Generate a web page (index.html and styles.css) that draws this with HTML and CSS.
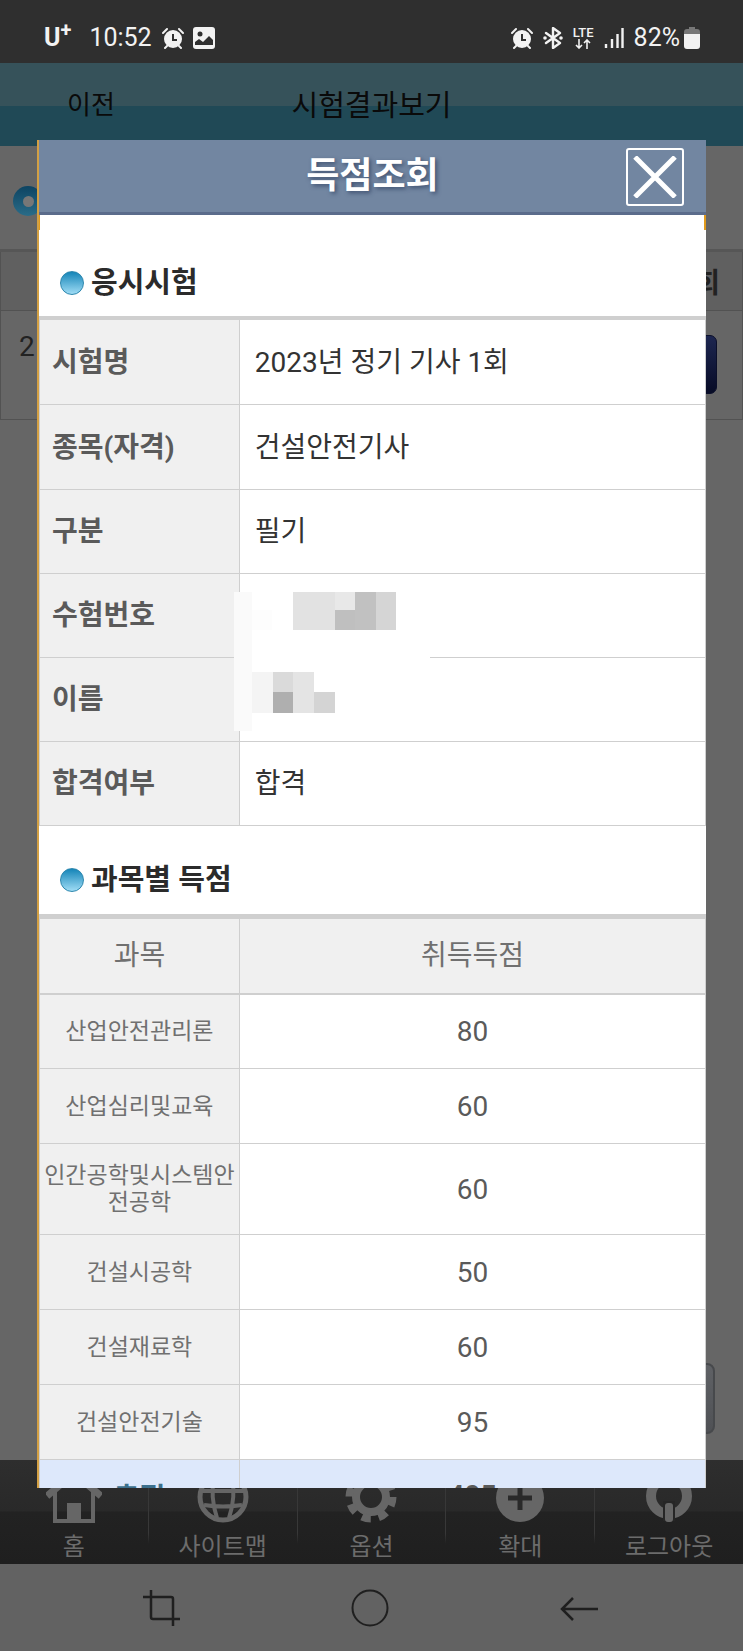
FILE: index.html
```html
<!DOCTYPE html>
<html lang="ko">

<head>
    <meta charset="UTF-8">
    <meta name="viewport" content="width=device-width, initial-scale=1.0">
    <title>득점조회</title>
    <link rel="stylesheet" href="styles.css">
</head>

<body>
    <!-- status bar -->
    <div class="status-bar">
        <span class="carrier">U<sup>+</sup></span>
        <span class="clock">10:52</span>
        <svg class="alarm" width="22" height="22" viewBox="0 0 22 22">
            <circle cx="11" cy="12" r="9" fill="#f2f2f2" />
            <path d="M1 6L5 2M21 6L17 2M5 19L3 21M17 19L19 21" stroke="#f2f2f2" stroke-width="2" stroke-linecap="round" />
            <path d="M11 7v6h4" fill="none" stroke="#2f2f2f" stroke-width="2" />
        </svg>
        <svg class="picture" width="22" height="22" viewBox="0 0 22 22">
            <rect width="22" height="22" rx="3" fill="#f2f2f2" />
            <circle cx="7" cy="7" r="2.5" fill="#2f2f2f" />
            <path d="M2 18v-3l4-3 4 3 6-6 4 4v5z" fill="#2f2f2f" />
        </svg>

        <div class="status-right">
            <svg width="22" height="22" viewBox="0 0 22 22">
                <circle cx="11" cy="12" r="9" fill="#f2f2f2" />
                <path d="M1 6L5 2M21 6L17 2M5 19L3 21M17 19L19 21" stroke="#f2f2f2" stroke-width="2" stroke-linecap="round" />
                <path d="M11 7v6h4" fill="none" stroke="#2f2f2f" stroke-width="2" />
            </svg>
            <svg width="20" height="22" viewBox="0 0 20 22">
                <path d="M3 6l14 10-7 5V1l7 5L3 16" fill="none" stroke="#f2f2f2" stroke-width="2.4" stroke-linejoin="round" stroke-linecap="round" />
                <circle cx="2" cy="11" r="1.8" fill="#f2f2f2" />
                <circle cx="18" cy="11" r="1.8" fill="#f2f2f2" />
            </svg>
            <span class="lte">LTE
                <svg width="16" height="10" viewBox="0 0 16 10">
                    <path d="M4 0v9M1 6l3 3 3-3M12 10V1M9 4l3-3 3 3" fill="none" stroke="#f2f2f2" stroke-width="1.6" />
                </svg>
            </span>
            <svg width="20" height="22" viewBox="0 0 20 22">
                <path d="M2 17v4M8 12v9M13.500 7v14M18.500 1v20" stroke="#f2f2f2" stroke-width="2.400" />
            </svg>
            <span class="battery-text">82%</span>
            <svg class="battery" width="16" height="22" viewBox="0 0 16 22">
                <path d="M5 0h6v2h2q3 0 3 3v3H0V5q0-3 3-3h2z" fill="#777" />
                <path d="M0 7h16v12q0 3-3 3H3q-3 0-3-3z" fill="#f2f2f2" />
            </svg>
        </div>
    </div>

    <header class="page-header">
        <a href="#" class="back">이전</a>
        <h1>시험결과보기</h1>
    </header>

    <!-- dimmed page under the popup -->
    <main class="page">
        <div class="page-title"><span class="ring"></span></div>
        <table class="exam-list">
            <tr>
                <th></th>
                <th class="view">회</th>
            </tr>
            <tr>
                <td class="year">2</td>
                <td class="view"><button type="button" class="navy" aria-label="득점조회"></button></td>
            </tr>
        </table>
        <button type="button" class="gray" aria-label="목록"></button>
    </main>

    <nav class="tab-bar">
        <a href="#">
            <svg width="56" height="56" viewBox="0 0 56 56">
                <path d="M28 6L1 29" stroke="#666" stroke-width="7" />
                <path d="M28 6l27 23" stroke="#666" stroke-width="7" />
                <path d="M9 24v30h38V24" fill="none" stroke="#666" stroke-width="4" />
                <path d="M7 52h42v4H7zM21 36h14v18H21z" fill="#666" />
            </svg>
            홈
        </a>
        <a href="#">
            <svg width="56" height="56" viewBox="0 0 56 56" fill="none" stroke="#666" stroke-width="4">
                <circle cx="28" cy="30" r="23" stroke-width="5" />
                <path d="M19 10q-4 20 3 41M37 10q4 20-3 41M5 24h46M9 38q19 3 38 0" />
            </svg>
            사이트맵
        </a>
        <a href="#">
            <svg width="56" height="56" viewBox="0 0 56 56" fill="none" stroke="#666">
                <circle cx="28" cy="30" r="15" stroke-width="8" />
                <circle cx="28" cy="30" r="21.500" stroke-width="8" stroke-dasharray="9 7.900" />
            </svg>
            옵션
        </a>
        <a href="#">
            <svg width="56" height="56" viewBox="0 0 56 56">
                <circle cx="28" cy="31" r="24" fill="#666" />
                <path d="M28 19v24M16 31h24" stroke="#2a2a2a" stroke-width="5" />
            </svg>
            확대
        </a>
        <a href="#">
            <svg width="56" height="56" viewBox="0 0 56 56">
                <circle cx="28" cy="29" r="18" fill="none" stroke="#666" stroke-width="10" />
                <rect x="22" y="34" width="12" height="20" fill="#262626" />
                <rect x="24" y="36" width="8" height="19" rx="3" fill="#666" />
            </svg>
            로그아웃
        </a>
    </nav>

    <div class="system-nav">
        <button type="button" aria-label="캡처">
            <svg width="38" height="38" viewBox="0 0 38 38" fill="none" stroke="#1f1f1f" stroke-width="2.500">
                <path d="M0 8h28q2 0 2 2v27M8 1v27q0 2 2 2h27" />
            </svg>
        </button>
        <button type="button" aria-label="홈">
            <svg width="38" height="38" viewBox="0 0 38 38" fill="none" stroke="#1f1f1f" stroke-width="2">
                <circle cx="19" cy="19" r="17.500" />
            </svg>
        </button>
        <button type="button" aria-label="뒤로">
            <svg width="38" height="38" viewBox="0 0 38 38" fill="none" stroke="#1f1f1f" stroke-width="2.500">
                <path d="M38 20H2M13 9L2 20l11 11" />
            </svg>
        </button>
    </div>

    <!-- popup -->
    <section class="popup">
        <header class="popup-header">
            <h2>득점조회</h2>
            <button type="button" class="close" aria-label="닫기">
                <svg width="44" height="42" viewBox="0 0 44 42">
                    <path d="M2 1L42 41M42 1L2 41" stroke="#fff" stroke-width="5" />
                </svg>
            </button>
        </header>

        <h3 class="first">응시시험</h3>
        <table class="info">
            <tr>
                <th>시험명</th>
                <td>2023년 정기 기사 1회</td>
            </tr>
            <tr>
                <th>종목(자격)</th>
                <td>건설안전기사</td>
            </tr>
            <tr>
                <th>구분</th>
                <td>필기</td>
            </tr>
            <tr>
                <th>수험번호</th>
                <td class="masked">
                    <svg class="mosaic" width="196" height="139" viewBox="0 0 196 139" shape-rendering="crispEdges">
                        <rect width="196" height="139" fill="#fff" />
                        <rect width="18" height="139" fill="#fafafa" />
                        <rect x="18" y="18" width="20" height="20" fill="#fdfdfd" />
                        <rect x="59" width="42" height="38" fill="#e2e2e2" />
                        <rect x="101" width="20" height="18" fill="#e8e8e8" />
                        <rect x="101" y="18" width="20" height="20" fill="#bfbfbf" />
                        <rect x="121" width="21" height="38" fill="#c1c1c1" />
                        <rect x="142" width="20" height="38" fill="#d5d5d5" />
                        <rect x="18" y="80" width="21" height="41" fill="#f4f4f4" />
                        <rect x="39" y="80" width="20" height="20" fill="#dadada" />
                        <rect x="39" y="100" width="20" height="21" fill="#afafaf" />
                        <rect x="59" y="80" width="21" height="41" fill="#e4e4e4" />
                        <rect x="80" y="100" width="21" height="21" fill="#d4d4d4" />
                    </svg>
                </td>
            </tr>
            <tr>
                <th>이름</th>
                <td></td>
            </tr>
            <tr>
                <th>합격여부</th>
                <td>합격</td>
            </tr>
        </table>

        <h3>과목별 득점</h3>
        <table class="score">
            <thead>
                <tr>
                    <th>과목</th>
                    <th>취득득점</th>
                </tr>
            </thead>
            <tbody>
                <tr>
                    <th>산업안전관리론</th>
                    <td>80</td>
                </tr>
                <tr>
                    <th>산업심리및교육</th>
                    <td>60</td>
                </tr>
                <tr>
                    <th>인간공학및시스템안전공학</th>
                    <td>60</td>
                </tr>
                <tr>
                    <th>건설시공학</th>
                    <td>50</td>
                </tr>
                <tr>
                    <th>건설재료학</th>
                    <td>60</td>
                </tr>
                <tr>
                    <th>건설안전기술</th>
                    <td>95</td>
                </tr>
                <tr class="total">
                    <th>총점</th>
                    <td>405</td>
                </tr>
            </tbody>
        </table>
    </section>
</body>

</html>
```

FILE: styles.css
```css
* {
    box-sizing: border-box;
}

body {
    margin: 0;
    min-height: 100vh;
    display: flex;
    flex-direction: column;
    position: relative;
    background-color: #666;
    color: #333;
    font-family: Roboto, "Noto Sans CJK KR", sans-serif;
    font-size: 28px;
}

h1, h2, h3 {
    margin: 0;
}

a {
    text-decoration: none;
}

button {
    border: none;
    padding: 0;
    background: none;
    cursor: pointer;
}

svg {
    display: block;
    flex: none;
}

table {
    width: 100%;
    border-collapse: collapse;
}

/* status bar */
.status-bar {
    display: flex;
    align-items: center;
    height: 63px;
    padding: 12px 43px 0 44px;
    background-color: #2f2f2f;
    color: #f2f2f2;
    font-size: 25px;
}

.carrier {
    font-weight: bold;
    line-height: 24px;
}

.carrier sup {
    font-size: 20px;
    line-height: 0;
}

.clock {
    margin-left: 18px;
}

.alarm {
    margin-left: 10px;
}

.picture {
    margin-left: 9px;
}

.status-right {
    display: flex;
    align-items: center;
    gap: 10px;
    margin-left: auto;
}

.lte {
    display: flex;
    flex-direction: column;
    align-items: center;
    font-size: 13px;
    font-weight: 500;
    line-height: 12px;
}

.battery {
    margin-left: -6px;
}

/* page behind */
.page-header {
    display: grid;
    grid-template-columns: 1fr auto 1fr;
    align-items: center;
    height: 83px;
    padding-bottom: 4px;
    background: linear-gradient(#36525a 52%, #204956 52%);
}

.page-header h1 {
    color: #0a0a0a;
    font-size: 29px;
    font-weight: normal;
}

.back {
    padding-left: 67px;
    color: #0a0a0a;
    font-size: 26px;
}

.page {
    flex: 1;
    display: flex;
    flex-direction: column;
    align-items: flex-start;
}

.page-title {
    display: flex;
    align-items: center;
    height: 103px;
    padding: 7px 13px 0 13px;
}

.ring {
    display: grid;
    place-items: center;
    width: 30px;
    height: 30px;
    border-radius: 50%;
    background: linear-gradient(#0d4462, #2a6c88);
}

.ring::before {
    content: "";
    width: 11px;
    height: 11px;
    border-radius: 50%;
    background-color: #777;
}

.exam-list th,
.exam-list td {
    border: 1px solid #525252;
    padding: 0 25px;
}

.exam-list th {
    height: 60px;
    border-top: 3px solid #565656;
    background-color: #606060;
    color: #222;
}

.exam-list th.view {
    padding-right: 22px;
}

.exam-list td {
    height: 109px;
    padding-top: 24px;
    vertical-align: top;
}

.exam-list .year {
    padding-left: 18px;
    color: #222;
    line-height: 24px;
}

.exam-list .view {
    text-align: right;
}

.navy {
    width: 120px;
    height: 59px;
    border: 1px solid #0b0f2a;
    border-radius: 7px;
    background: linear-gradient(#1d2650, #070b26);
}

.gray {
    align-self: flex-end;
    width: 120px;
    height: 71px;
    margin: auto 28px 26px 0;
    border: 2px solid #47494c;
    border-radius: 8px;
    background: linear-gradient(#5f6165, #4f5155);
}

.tab-bar {
    display: flex;
    height: 104px;
    background: linear-gradient(#2e2e2e, #292929 49%, #222 50%, #1f1f1f);
}

.tab-bar a {
    flex: 1;
    display: flex;
    flex-direction: column;
    align-items: center;
    padding-top: 7px;
    color: #6c6c6c;
    font-size: 24px;
    line-height: 48px;
}

.tab-bar a + a {
    border-left: 1px solid;
    border-image: linear-gradient(#383838 70%, transparent 80%) 1;
}

.system-nav {
    display: flex;
    justify-content: space-around;
    align-items: center;
    height: 87px;
    padding: 0 60px 0 58px;
    background-color: #626262;
}

/* popup */
.popup {
    position: absolute;
    top: 140px;
    right: 37px;
    bottom: 163px;
    left: 37px;
    overflow: hidden;
    border-left: 2px solid #d3a044;
    background-color: #fff;
}

.popup-header {
    display: grid;
    grid-template-columns: 1fr auto 1fr;
    align-items: center;
    height: 75px;
    border-bottom: 3px solid #5b6c8b;
    background-color: #7286a1;
}

.popup-header h2 {
    grid-column: 2;
    color: #fff;
    font-size: 36px;
    line-height: 48px;
    text-shadow: 2px 2px 4px #3f5170;
}

.close {
    display: grid;
    place-items: center;
    justify-self: end;
    width: 58px;
    height: 58px;
    margin: 2px 22px 0 0;
    border: 2px solid #fff;
    border-radius: 3px;
}

h3 {
    display: flex;
    align-items: center;
    gap: 7px;
    padding: 34px 21px 14px 21px;
    color: #2b2b2b;
    font-size: 29px;
    line-height: 40px;
}

/* orange ticks under the popup header */
h3.first {
    padding-top: 48px;
    padding-bottom: 13px;
    background:
        linear-gradient(#e09a1c, #e09a1c) left top / 1px 15px no-repeat,
        linear-gradient(#e09a1c, #e09a1c) right top / 2px 15px no-repeat;
}

h3::before {
    content: "";
    width: 22px;
    height: 22px;
    border: 1px solid #2d87ae;
    border-radius: 50%;
    background: linear-gradient(#1585b8, #9fdcf5);
}

.popup table {
    table-layout: fixed;
    border-top: 4px solid #cfcfcf;
}

.popup th,
.popup td {
    border: 1px solid #cfcfcf;
}

.popup th {
    width: 30%;
    background-color: #f0f0f0;
}

.info {
    height: 510px;
}

.info th,
.info td {
    padding: 0 15px 4px 15px;
    text-align: left;
}

.info th {
    padding-left: 12px;
    color: #5a5a5a;
}

.info .masked {
    position: relative;
}

.mosaic {
    position: absolute;
    top: 18px;
    left: -6px;
}

.score th,
.score td {
    height: 75px;
    padding: 0;
    color: #5a5a5a;
    font-weight: normal;
    text-align: center;
}

.score th {
    padding: 18px 3px;
    color: #707070;
    font-size: 23px;
    line-height: 27px;
}

.popup .score {
    border-top-width: 5px;
}

.score thead th {
    height: 77px;
    border-bottom-width: 2px;
    font-size: 28px;
}

.score thead th + th {
    width: 70%;
}

.popup .total th,
.popup .total td {
    height: 77px;
    background-color: #dde8fb;
    font-size: 28px;
    font-weight: bold;
}

.popup .total td {
    padding-bottom: 6px;
}

.popup .total th {
    color: #3c6f8c;
}
```
